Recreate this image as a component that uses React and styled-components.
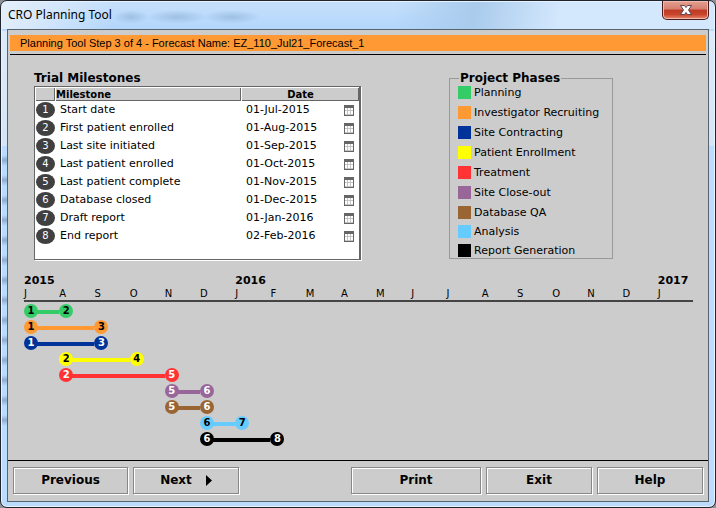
import React from "react";
import styled, { createGlobalStyle } from "styled-components";

const GlobalStyle = createGlobalStyle`
  * { box-sizing: border-box; }
  body {
    margin: 0;
    background: #8d9094;
    color: #000;
    font-family: Verdana, "DejaVu Sans", sans-serif;
    font-size: 11px;
  }
`;

const milestones = [
  ["Start date", "01-Jul-2015"],
  ["First patient enrolled", "01-Aug-2015"],
  ["Last site initiated", "01-Sep-2015"],
  ["Last patient enrolled", "01-Oct-2015"],
  ["Last patient complete", "01-Nov-2015"],
  ["Database closed", "01-Dec-2015"],
  ["Draft report", "01-Jan-2016"],
  ["End report", "02-Feb-2016"],
];

const phases = [
  { name: "Planning", color: "#33cc66", ink: "#000", from: 1, to: 2 },
  { name: "Investigator Recruiting", color: "#ff9933", ink: "#000", from: 1, to: 3 },
  { name: "Site Contracting", color: "#003399", ink: "#fff", from: 1, to: 3 },
  { name: "Patient Enrollment", color: "#ffff00", ink: "#000", from: 2, to: 4 },
  { name: "Treatment", color: "#ff3333", ink: "#fff", from: 2, to: 5 },
  { name: "Site Close-out", color: "#996699", ink: "#fff", from: 5, to: 6 },
  { name: "Database QA", color: "#996633", ink: "#fff", from: 5, to: 6 },
  { name: "Analysis", color: "#66ccff", ink: "#000", from: 6, to: 7 },
  { name: "Report Generation", color: "#000000", ink: "#fff", from: 6, to: 8 },
];

const months = "JASONDJFMAMJJASONDJ".split("");
const years = [
  { label: "2015", column: 1 },
  { label: "2016", column: 7 },
  { label: "2017", column: 19 },
];

const Window = styled.div`
  min-height: 100vh;
  display: flex;
  flex-direction: column;
  padding: 0 6px 5px;
  border: 1px solid #20242c;
  border-radius: 7px;
  box-shadow: inset 0 0 0 1px #e6f3ff;
  background:
    radial-gradient(closest-side, #8fb3d8aa, transparent) 112px 9px / 36px 14px no-repeat,
    radial-gradient(closest-side, #8fb3d8aa, transparent) 146px 9px / 60px 14px no-repeat,
    radial-gradient(closest-side, #8fb3d8aa, transparent) 202px 9px / 58px 14px no-repeat,
    linear-gradient(100deg, #e4effa 0, #cfe3f800 16%, transparent 55%, #a9cbec 66%, #d3e7fd 78%, #d3e7fd 100%) top / 100% 28px no-repeat,
    linear-gradient(#c6e0fb 0, #b4d6fb 28px, transparent 29px) top / 100% 30px no-repeat,
    linear-gradient(#dcebfa, #d3e5f7) left 30px / 8px 115px no-repeat,
    repeating-linear-gradient(#bcdcff 0 9px, #8facce 14px, #bcdcff 20px) left 145px / 8px 280px no-repeat,
    linear-gradient(#dcebfa, #d3e5f7) right 30px / 8px 115px no-repeat,
    #bcdcff;
`;

const TitleBar = styled.header`
  height: 28px;
  flex: none;
  display: flex;
  align-items: flex-start;
  justify-content: space-between;
`;

const Title = styled.h1`
  margin: 0;
  padding: 5px 14px 0 1px;
  font: 12px/18px "Segoe UI", "Noto Sans", sans-serif;
`;

const CloseButton = styled.button`
  width: 47px;
  height: 19px;
  padding: 0;
  display: flex;
  align-items: center;
  justify-content: center;
  border: 1px solid #4a1a1c;
  border-top: 0;
  border-radius: 0 0 5px 5px;
  box-shadow: inset 0 0 0 1px #f0b9ac;
  background: linear-gradient(#e5a092 0, #d6806f 45%, #bd3a24 50%, #c9452c 75%, #e88a6c 100%);
`;

const Client = styled.div`
  flex: 1;
  display: flex;
  flex-direction: column;
  border: 1px solid #56646f;
  background: #cccccc;
`;

const Banner = styled.p`
  margin: 5px 2px 0;
  padding: 0 10px;
  background: #ff9933;
  font: 11px/16px Arial, "Liberation Sans", sans-serif;
`;

const Rule = styled.hr`
  margin: 3px 2px 0;
  border: 0;
  border-top: 1px solid #000;
`;

const Overview = styled.section`
  display: grid;
  grid-template-columns: 327fr 164fr;
  column-gap: 88px;
  align-items: start;
  padding: 16px 95px 0 26px;
`;

const Heading = styled.h2`
  margin: 0;
  font-size: 12px;
  line-height: 15px;
`;

const TableFrame = styled.div`
  padding-bottom: 14px;
  border: 1px solid #666;
  border-right-width: 2px;
  box-shadow: 1px 1px 0 #fff;
  background: #fff;
`;

const Table = styled.table`
  width: 100%;
  border-collapse: separate;
  border-spacing: 0;
  table-layout: fixed;
`;

const HeadCell = styled.th`
  width: ${(p) => p.$width || "auto"};
  height: 14px;
  padding: 0;
  border: 1px solid #fff;
  border-width: 1px 0 0 1px;
  box-shadow: inset -1px -1px 0 #666;
  background: #ccc;
  font-size: 10px;
  line-height: 13px;
  text-align: ${(p) => p.$align || "left"};
`;

const Cell = styled.td`
  height: 18px;
  padding: 0 0 0 ${(p) => p.$indent || "0"};
  font-size: 11px;
  line-height: 18px;
`;

const Badge = styled.span`
  display: block;
  width: 19px;
  height: 16px;
  margin-left: 1px;
  border-radius: 50%;
  background: #404040;
  color: #fff;
  font-size: 10px;
  line-height: 16px;
  text-align: center;
`;

const DateEntry = styled.div`
  display: flex;
  align-items: center;
  justify-content: space-between;
  padding-right: 5px;
`;

const CalendarButton = styled.button`
  width: 10px;
  height: 11px;
  padding: 0;
  border: 0;
  background: none;
  svg { display: block; }
`;

const Phases = styled.fieldset`
  min-width: 0;
  margin: 0;
  padding: 0 8px 1px;
  border: 1px solid #999;
`;

const PhasesLegend = styled.legend`
  margin-left: 1px;
  padding: 0 1px;
  font-size: 12px;
  font-weight: bold;
  line-height: 15px;
  white-space: nowrap;
`;

const PhaseList = styled.ul`
  margin: 0;
  padding: 0;
  list-style: none;
`;

const Phase = styled.li`
  display: flex;
  align-items: center;
  gap: 3px;
  height: 13px;
  white-space: nowrap;
  & + & { margin-top: 7px; }
  &&:nth-last-child(-n + 2) { margin-top: 6px; }
`;

const Swatch = styled.span`
  flex: none;
  width: 13px;
  height: 13px;
  background: ${(p) => p.$color};
`;

const Timeline = styled.section`
  padding: 13px 15px 0 16px;
`;

const MonthGrid = styled.div`
  display: grid;
  grid-template-columns: repeat(19, minmax(0, 1fr));
`;

const Scale = styled(MonthGrid)`
  margin-bottom: 1px;
  border-bottom: 2px solid #444;
`;

const Year = styled.strong`
  grid-row: 1;
  grid-column: ${(p) => p.$column};
  font-size: 11px;
  line-height: 15px;
`;

const Month = styled.span`
  grid-row: 2;
  font-size: 10px;
  line-height: 12px;
`;

const Bars = styled(MonthGrid)`
  grid-auto-rows: 16px;
  align-items: center;
`;

const Bar = styled.span`
  grid-row: ${(p) => p.$row};
  grid-column: ${(p) => p.$from} / ${(p) => p.$to};
  height: 4px;
  margin: 1px 0 0 7px;
  background: ${(p) => p.$color};
`;

const Dot = styled.span`
  grid-row: ${(p) => p.$row};
  grid-column: ${(p) => p.$at};
  width: 14px;
  height: 14px;
  border-radius: 50%;
  background: ${(p) => p.$color};
  color: ${(p) => p.$ink};
  font-size: 10px;
  font-weight: bold;
  line-height: 14px;
  text-align: center;
`;

const Footer = styled.footer`
  margin-top: auto;
  display: grid;
  grid-template-columns: 115fr 106fr 102fr 130fr 106fr 106fr;
  gap: 5px;
  padding: 6px 5px 7px 5px;
  border-top: 1px solid #000;
`;

const Button = styled.button`
  height: 27px;
  padding: 0;
  display: flex;
  align-items: center;
  justify-content: center;
  gap: 14px;
  border: 1px solid #888;
  border-radius: 0;
  box-shadow: inset 1px 1px 0 #fff, 1px 1px 0 #fff;
  background: #ccc;
  color: #000;
  font: bold 12px/15px Verdana, "DejaVu Sans", sans-serif;
`;

const PrintButton = styled(Button)`
  grid-column: 4;
`;

function CalendarIcon() {
  return (
    <svg width="10" height="11" viewBox="0 0 10 11" shapeRendering="crispEdges" aria-hidden="true">
      <rect width="10" height="11" fill="#666" />
      <rect x="1" y="3" width="8" height="7" fill="#c4c4c4" />
      {[1, 4, 7].map((x) =>
        [3, 6, 8].map((y) => (
          <rect key={`${x}-${y}`} x={x} y={y} width="2" height={y === 8 ? 1 : 2} fill="#fff" />
        ))
      )}
    </svg>
  );
}

function CloseIcon() {
  return (
    <svg width="14" height="12" viewBox="0 0 14 12" aria-hidden="true">
      <path
        d="M1.500 1.500h4L7 3.500l1.500-2h4L9.500 6l3 4.500h-4L7 8.500l-1.500 2h-4L4.500 6z"
        fill="#fff"
        stroke="#5b4550"
        strokeWidth="1"
      />
    </svg>
  );
}

function PhaseBar({ phase, row }) {
  const { color, ink, from, to } = phase;
  return (
    <>
      <Bar $row={row} $from={from} $to={to} $color={color} />
      <Dot $row={row} $at={from} $color={color} $ink={ink}>{from}</Dot>
      <Dot $row={row} $at={to} $color={color} $ink={ink}>{to}</Dot>
    </>
  );
}

export default function App() {
  return (
    <>
      <GlobalStyle />
      <Window>
        <TitleBar>
          <Title>CRO Planning Tool</Title>
          <CloseButton aria-label="Close"><CloseIcon /></CloseButton>
        </TitleBar>
        <Client>
          <Banner>Planning Tool Step 3 of 4 - Forecast Name: EZ_110_Jul21_Forecast_1</Banner>
          <Rule />
          <Overview>
            <div>
              <Heading id="milestones">Trial Milestones</Heading>
              <TableFrame>
                <Table aria-labelledby="milestones">
                  <thead>
                    <tr>
                      <HeadCell $width="20px" />
                      <HeadCell>Milestone</HeadCell>
                      <HeadCell $width="118px" $align="center">Date</HeadCell>
                    </tr>
                  </thead>
                  <tbody>
                    {milestones.map(([name, date], i) => (
                      <tr key={name}>
                        <Cell><Badge>{i + 1}</Badge></Cell>
                        <Cell $indent="5px">{name}</Cell>
                        <Cell $indent="5px">
                          <DateEntry>
                            {date}
                            <CalendarButton aria-label={`Choose date: ${name}`}>
                              <CalendarIcon />
                            </CalendarButton>
                          </DateEntry>
                        </Cell>
                      </tr>
                    ))}
                  </tbody>
                </Table>
              </TableFrame>
            </div>
            <Phases>
              <PhasesLegend>Project Phases</PhasesLegend>
              <PhaseList>
                {phases.map((p) => (
                  <Phase key={p.name}><Swatch $color={p.color} />{p.name}</Phase>
                ))}
              </PhaseList>
            </Phases>
          </Overview>
          <Timeline>
            <Scale>
              {years.map((y) => <Year key={y.label} $column={y.column}>{y.label}</Year>)}
              {months.map((m, i) => <Month key={i}>{m}</Month>)}
            </Scale>
            <Bars>
              {phases.map((p, i) => <PhaseBar key={p.name} phase={p} row={i + 1} />)}
            </Bars>
          </Timeline>
          <Footer>
            <Button>Previous</Button>
            <Button>
              Next
              <svg width="6" height="11" viewBox="0 0 6 11" aria-hidden="true">
                <path d="M0 0l6 5.500-6 5.500z" />
              </svg>
            </Button>
            <PrintButton>Print</PrintButton>
            <Button>Exit</Button>
            <Button>Help</Button>
          </Footer>
        </Client>
      </Window>
    </>
  );
}
